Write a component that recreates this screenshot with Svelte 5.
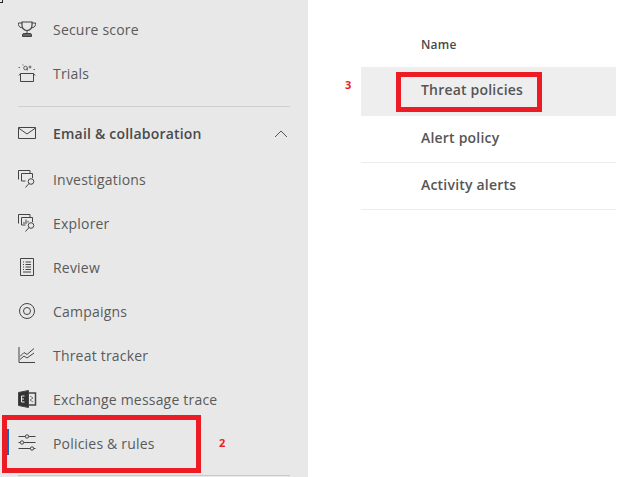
<script>
  const topItems = [
    { id: 'trophy', label: 'Secure score' },
    { id: 'trials', label: 'Trials' }
  ]
  const subItems = [
    { id: 'investigate', label: 'Investigations' },
    { id: 'explorer', label: 'Explorer' },
    { id: 'review', label: 'Review' },
    { id: 'campaigns', label: 'Campaigns' },
    { id: 'tracker', label: 'Threat tracker' },
    { id: 'exchange', label: 'Exchange message trace' },
    { id: 'policies', label: 'Policies & rules', active: true }
  ]
  const rows = [
    { name: 'Threat policies', selected: true },
    { name: 'Alert policy' },
    { name: 'Activity alerts' }
  ]
</script>

{#snippet icon(id)}
  <svg class="icon" width="20" height="20" viewBox="0 0 20 20" fill="none" stroke="#444" stroke-width="1">
    {#if id === 'trophy'}
      <path d="M5 3h10v3.500a5 5 0 0 1-10 0z" stroke-width="1.200"/>
      <path d="M5 4H1.500v1.500a3.500 3.500 0 0 0 4 3.200M15 4h3.500v1.500a3.500 3.500 0 0 1-4 3.200M10 11.500v3"/>
      <path d="M5.500 17.500v-1.500a1.500 1.500 0 0 1 1.500-1.500h6a1.500 1.500 0 0 1 1.500 1.500v1.500z" fill="#666"/>
    {:else if id === 'trials'}
      <path d="M3.500 10.500h13v8h-13zM3.500 10.500l-1.500 2M16.500 10.500l1.500 2"/>
      <circle cx="8.500" cy="5" r="1.800" stroke-width=".8"/>
      <path d="M10.300 5v2.500M13 2.500v3M11.500 4h3M1.500 4.500h1.500M5.500 2h1M16.500 6.500h1.500" stroke-width=".8"/>
    {:else if id === 'mail'}
      <path d="M1.500 4.500h17v11h-17zM1.500 5l8.500 6 8.500-6"/>
    {:else if id === 'investigate'}
      <path d="M1.500 10.500V1.500h11.500v2.500M4.500 4.500h11v4.500M4.500 4.500v7.500h4"/>
      <circle cx="14" cy="12.500" r="2.800"/>
      <path d="M12 14.500l-3.500 4"/>
    {:else if id === 'explorer'}
      <path d="M1.500 10.500V1.500h11.500v2.500M4.500 4.500h11v4.500M4.500 4.500v7.500h4"/>
      <path d="M7 11V9M9 11V6.500M11 9.500V8"/>
      <circle cx="14" cy="12.500" r="2.800"/>
      <path d="M12 14.500l-3.500 4"/>
    {:else if id === 'review'}
      <path d="M3.500 1.500h13v17h-13zM6 5h1M8.500 5h5.500M6 7.500h1M8.500 7.500h5.500M6 10h1M8.500 10h5.500M6 12.500h1M8.500 12.500h5.500M6 15h8"/>
    {:else if id === 'campaigns'}
      <circle cx="10" cy="10" r="7.500"/>
      <circle cx="10" cy="10" r="3.500"/>
    {:else if id === 'tracker'}
      <path d="M2 2v15.500h16M3 11.500l4-4 3 2 7-6M3 14.500l4-3.500 3 2 7-5"/>
    {:else if id === 'exchange'}
      <path d="M1.500 3.500l10-2v17l-10-2z" fill="#333"/>
      <path d="M11.500 4h7v12h-7" stroke-width="1.500"/>
      <path d="M7.500 7h-3v6h3M4.500 10h2.500" stroke="#eee"/>
      <path d="M13 7l3 2-3 2 3 2" stroke="#777"/>
    {:else if id === 'policies'}
      <path d="M1.500 3.500h17M1.500 9.500h17M1.500 15.500h17"/>
      <circle cx="10" cy="3.500" r="1.700" fill="#e8e8e8"/>
      <circle cx="5" cy="9.500" r="1.700" fill="#e8e8e8"/>
      <circle cx="15" cy="15.500" r="1.700" fill="#e8e8e8"/>
    {/if}
  </svg>
{/snippet}

<div class="page">
  <span class="corner"></span>
  <nav class="sidebar">
    {#each topItems as item}
      <div class="nav-item">
        {@render icon(item.id)}
        <span class="label">{item.label}</span>
      </div>
    {/each}
    <hr />
    <div class="nav-item group">
      {@render icon('mail')}
      <span class="label">Email &amp; collaboration</span>
      <svg class="chevron" width="16" height="16" viewBox="0 0 16 16" fill="none" stroke="#555" stroke-width="1">
        <path d="M2 11l6-6 6 6"/>
      </svg>
    </div>
    {#each subItems as item}
      <div class="nav-item" class:active={item.active}>
        {@render icon(item.id)}
        <span class="label">{item.label}</span>
      </div>
    {/each}
    <hr class="bottom" />
    <div class="mark box-nav"></div>
    <b class="num num-two">2</b>
  </nav>

  <main class="content">
    <div class="table">
      <div class="head">Name</div>
      {#each rows as row}
        <div class="row" class:selected={row.selected}>{row.name}</div>
      {/each}
      <div class="mark box-row"></div>
      <b class="num num-three">3</b>
    </div>
  </main>
</div>

<style>
  :global(body) {
    margin: 0;
    background: #fff;
    overflow: hidden;
  }
  .page {
    display: flex;
    height: 477px;
    overflow: hidden;
    position: relative;
    font-family: "Open Sans", "Noto Sans", sans-serif;
    font-size: 14px;
    letter-spacing: 0.2px;
    color: #5a5a5a;
  }
  .corner {
    position: absolute;
    left: 0;
    top: 0;
    width: 2px;
    height: 2px;
    border: 1px solid #222;
    border-top: 0;
    border-left: 0;
    z-index: 2;
  }
  .sidebar {
    position: relative;
    width: 308px;
    flex: none;
    box-sizing: border-box;
    padding-top: 8px;
    background: #e8e8e8;
  }
  .nav-item {
    position: relative;
    display: flex;
    align-items: center;
    height: 44px;
    padding-left: 17px;
    padding-right: 18px;
  }
  .icon {
    flex: none;
    margin-right: 16px;
    margin-top: -2px;
  }
  .label {
    margin-bottom: 2px;
  }
  .group {
    font-weight: 600;
    color: #4a4a4a;
    margin-bottom: 2px;
  }
  .chevron {
    margin-left: auto;
    margin-right: 1px;
  }
  .active::before {
    content: "";
    position: absolute;
    left: 7px;
    top: 7px;
    width: 2px;
    height: 26px;
    background: #0f6cbd;
  }
  hr {
    border: 0;
    height: 1px;
    background: #cfcfcf;
    margin: 10px 18px 5px;
  }
  hr.bottom {
    margin-top: 9px;
    background: #c9c9c9;
  }
  .content {
    flex: 1;
    padding: 22px 11px 0 53px;
  }
  .table {
    position: relative;
  }
  .head {
    height: 45px;
    box-sizing: border-box;
    padding: 14px 0 0 60px;
    font-size: 12px;
    font-weight: 600;
    color: #4a4a4a;
  }
  .row {
    display: flex;
    align-items: center;
    box-sizing: border-box;
    height: 47px;
    padding: 0 0 4px 60px;
    font-size: 14px;
    font-weight: 600;
    color: #555;
    border-bottom: 1px solid #ececec;
  }
  .row.selected {
    height: 49px;
    border-bottom: 0;
    background: #eeeeee;
  }
  .mark {
    position: absolute;
    box-sizing: border-box;
    border: 5px solid #ed1c24;
  }
  .box-nav {
    left: 2px;
    top: 415px;
    width: 199px;
    height: 58px;
  }
  .box-row {
    left: 35px;
    top: 50px;
    width: 146px;
    height: 40px;
  }
  .num {
    position: absolute;
    color: #ed1c24;
    font-size: 11px;
    font-weight: 700;
    line-height: 12px;
    letter-spacing: 0;
  }
  .num-two {
    left: 219px;
    top: 437px;
  }
  .num-three {
    left: -16px;
    top: 57px;
  }
</style>
